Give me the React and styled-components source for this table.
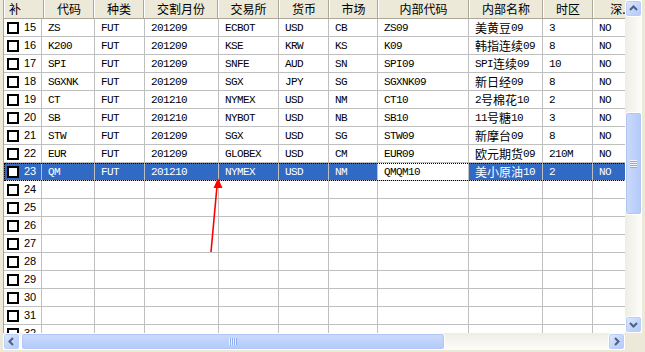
import React from 'react';
import styled, { createGlobalStyle } from 'styled-components';

const Global = createGlobalStyle`
  html, body { margin: 0; padding: 0; background: #ECE9D8; }
  body { width: 645px; height: 352px; overflow: hidden; }
`;

const Frame = styled.div`
  position: relative;
  width: 645px;
  height: 352px;
  box-sizing: border-box;
  padding: 0 3px 2px 3px;
  background: #ECE9D8;
  display: grid;
  grid-template-columns: 1fr 17px;
  grid-template-rows: 1fr 17px;
`;

const Viewport = styled.div`
  overflow: hidden;
  background: #fff;
  border-left: 1px solid #ACA899;
`;

const HeaderRow = styled.div`
  display: flex;
  height: 19px;
  box-sizing: border-box;
  border-bottom: 1px solid #ACA899;
  background: #ECE9D8;
  width: 700px;
`;

const HeaderCell = styled.div`
  flex: 0 0 ${p => p.$w}px;
  box-sizing: border-box;
  border-left: 1px solid #fff;
  border-right: 1px solid #ACA899;
  font-family: "Noto Sans CJK SC", sans-serif;
  font-size: 12px;
  line-height: 18px;
  color: #000;
  text-align: ${p => (p.$left ? 'left' : 'center')};
  padding-left: ${p => (p.$left ? '4px' : '0')};
  white-space: nowrap;
  overflow: hidden;
`;

const Row = styled.div`
  display: flex;
  height: 18px;
  box-sizing: border-box;
  border-bottom: 1px solid #BFBFBF;
  width: 700px;
  background: ${p => (p.$selected ? '#316AC5' : '#fff')};
  color: ${p => (p.$selected ? '#fff' : '#000')};
  outline: ${p => (p.$selected ? '1px dotted #000' : 'none')};
  outline-offset: -1px;
`;

const Cell = styled.div`
  flex: 0 0 ${p => p.$w}px;
  box-sizing: border-box;
  border-right: 1px solid #BFBFBF;
  padding-left: 6px;
  display: flex;
  align-items: center;
  white-space: nowrap;
  overflow: hidden;
  ${p => (p.$edit ? 'background: #fff; color: #000;' : '')}
`;

const Latin = styled.span`
  font-family: "Liberation Mono", monospace;
  font-size: 11px;
  letter-spacing: -0.6px;
  line-height: 12px;
  padding-top: 1px;
`;

const Han = styled.span`
  font-family: "Noto Sans CJK SC", sans-serif;
  font-size: 12px;
  line-height: 14px;
`;

const CheckCell = styled.div`
  flex: 0 0 ${p => p.$w}px;
  box-sizing: border-box;
  border-right: 1px solid #BFBFBF;
  display: flex;
  align-items: center;
  gap: 5px;
  padding-left: 3px;
`;

const Box = styled.span`
  width: 12px;
  height: 12px;
  box-sizing: border-box;
  border: 2px solid #000;
  background: #fff;
  flex: 0 0 auto;
`;

const Num = styled.span`
  font-family: "Liberation Sans", Arial, sans-serif;
  font-size: 11px;
  line-height: 17px;
`;

const VScroll = styled.div`
  display: flex;
  flex-direction: column;
  background: linear-gradient(90deg, #EEEDE5, #FDFDFA);
`;

const HScroll = styled.div`
  display: flex;
  background: linear-gradient(180deg, #EEEDE5, #FDFDFA);
`;

const Btn = styled.div`
  flex: 0 0 17px;
  width: ${p => (p.$h ? '17px' : 'auto')};
  height: 17px;
  box-sizing: border-box;
  border: 1px solid #fff;
  border-radius: 3px;
  background: linear-gradient(135deg, #E0EAFE, #C0D3FB 60%, #B4CAF8);
  box-shadow: inset 0 0 0 1px #BACEF7;
  display: flex;
  align-items: center;
  justify-content: center;
  margin-top: ${p => (p.$end && !p.$h ? 'auto' : '0')};
  margin-left: ${p => (p.$end && p.$h ? 'auto' : '0')};
`;

const VThumb = styled.div`
  margin-top: 95px;
  height: 103px;
  box-sizing: border-box;
  border: 1px solid #fff;
  border-radius: 3px;
  background: linear-gradient(90deg, #CCDBFD, #BCD0FB 60%, #B3CAF8);
  box-shadow: inset 0 0 0 1px #B1C6F5;
  display: flex;
  align-items: center;
  justify-content: center;
`;

const HThumb = styled.div`
  margin-left: 1px;
  width: 424px;
  box-sizing: border-box;
  border: 1px solid #fff;
  border-radius: 3px;
  background: linear-gradient(180deg, #CCDBFD, #BCD0FB 60%, #B3CAF8);
  box-shadow: inset 0 0 0 1px #B1C6F5;
  display: flex;
  align-items: center;
  justify-content: center;
`;

const Grip = styled.span`
  width: ${p => (p.$h ? '8px' : '7px')};
  height: ${p => (p.$h ? '7px' : '8px')};
  background: repeating-linear-gradient(
    ${p => (p.$h ? 'to right' : 'to bottom')},
    #EEF4FE 0 1px,
    #8CACEF 1px 2px
  );
`;

const Corner = styled.div`
  background: #ECE9D8;
`;

const Overlay = styled.svg`
  position: absolute;
  left: 0;
  top: 0;
  pointer-events: none;
`;

const Chevron = ({ dir }) => {
  const pts = {
    up: '1,6 4.5,2.5 8,6',
    down: '1,3 4.5,6.5 8,3',
    left: '6,1 2.5,4.5 6,8',
    right: '3,1 6.5,4.5 3,8',
  }[dir];
  return (
    <svg width="9" height="9" viewBox="0 0 9 9">
      <polyline points={pts} fill="none" stroke="#4D6185" strokeWidth="2" />
    </svg>
  );
};

const headers = [
  { t: '补', w: 40, left: true },
  { t: '代码', w: 50 },
  { t: '种类', w: 50 },
  { t: '交割月份', w: 74 },
  { t: '交易所', w: 61 },
  { t: '货币', w: 50 },
  { t: '市场', w: 49 },
  { t: '内部代码', w: 91 },
  { t: '内部名称', w: 74 },
  { t: '时区', w: 50 },
  { t: '深.', w: 50 },
];

const widths = [38, 53, 50, 74, 60, 50, 49, 91, 74, 50, 60];

const data = [
  [15, 'ZS', 'FUT', '201209', 'ECBOT', 'USD', 'CB', 'ZS09', '美黄豆09', '3', 'NO'],
  [16, 'K200', 'FUT', '201209', 'KSE', 'KRW', 'KS', 'K09', '韩指连续09', '8', 'NO'],
  [17, 'SPI', 'FUT', '201209', 'SNFE', 'AUD', 'SN', 'SPI09', 'SPI连续09', '10', 'NO'],
  [18, 'SGXNK', 'FUT', '201209', 'SGX', 'JPY', 'SG', 'SGXNK09', '新日经09', '8', 'NO'],
  [19, 'CT', 'FUT', '201210', 'NYMEX', 'USD', 'NM', 'CT10', '2号棉花10', '2', 'NO'],
  [20, 'SB', 'FUT', '201210', 'NYBOT', 'USD', 'NB', 'SB10', '11号糖10', '3', 'NO'],
  [21, 'STW', 'FUT', '201209', 'SGX', 'USD', 'SG', 'STW09', '新摩台09', '8', 'NO'],
  [22, 'EUR', 'FUT', '201209', 'GLOBEX', 'USD', 'CM', 'EUR09', '欧元期货09', '210M', 'NO'],
  [23, 'QM', 'FUT', '201210', 'NYMEX', 'USD', 'NM', 'QMQM10', '美小原油10', '2', 'NO'],
];
for (let n = 24; n <= 32; n++) data.push([n, '', '', '', '', '', '', '', '', '', '']);

const renderText = s =>
  s.split(/([\u3400-\u9fff]+)/).filter(Boolean).map((part, i) =>
    /[\u3400-\u9fff]/.test(part) ? <Han key={i}>{part}</Han> : <Latin key={i}>{part}</Latin>
  );

export default function App() {
  return (
    <>
      <Global />
      <Frame>
        <Viewport>
          <HeaderRow>
            {headers.map(h => (
              <HeaderCell key={h.t} $w={h.w} $left={h.left}>{h.t}</HeaderCell>
            ))}
          </HeaderRow>
          {data.map(r => {
            const sel = r[0] === 23;
            return (
              <Row key={r[0]} $selected={sel}>
                <CheckCell $w={widths[0]}>
                  <Box />
                  <Num>{r[0]}</Num>
                </CheckCell>
                {r.slice(1).map((v, i) => (
                  <Cell key={i} $w={widths[i + 1]} $edit={sel && i === 6}>
                    {renderText(v)}
                  </Cell>
                ))}
              </Row>
            );
          })}
        </Viewport>
        <VScroll>
          <Btn><Chevron dir="up" /></Btn>
          <VThumb><Grip /></VThumb>
          <Btn $end><Chevron dir="down" /></Btn>
        </VScroll>
        <HScroll>
          <Btn $h><Chevron dir="left" /></Btn>
          <HThumb><Grip $h /></HThumb>
          <Btn $h $end><Chevron dir="right" /></Btn>
        </HScroll>
        <Corner />
        <Overlay width="645" height="352" viewBox="0 0 645 352">
          <line x1="217" y1="186" x2="211" y2="252" stroke="#FF0000" strokeWidth="1.6" />
          <polygon points="218,178 213.5,188 222.5,188" fill="#FF0000" />
        </Overlay>
      </Frame>
    </>
  );
}
